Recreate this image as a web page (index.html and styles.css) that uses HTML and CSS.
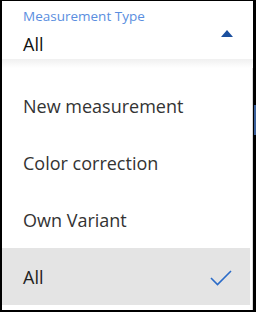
FILE: index.html
```html
<!DOCTYPE html>
<html>
<head>
<meta charset="utf-8">
<link rel="stylesheet" href="styles.css">
</head>
<body>
<div class="frame">
  <div class="field">
    <div class="field-text">
      <div class="label">Measurement Type</div>
      <div class="value">All</div>
    </div>
    <svg class="caret" width="12" height="7" viewBox="0 0 12 7"><path d="M0 7 L6 0 L12 7 Z" fill="#1b4f9e"/></svg>
  </div>
  <div class="shadow"></div>
  <ul class="menu">
    <li class="item">New measurement</li>
    <li class="item">Color correction</li>
    <li class="item">Own Variant</li>
    <li class="item selected"><span>All</span>
      <svg class="check" width="22" height="16" viewBox="0 0 22 16"><path d="M1 8 L7.5 14.5 L21 1" fill="none" stroke="#2a6bc8" stroke-width="1.6"/></svg>
    </li>
  </ul>
  <div class="scroll-hint"></div>
</div>
</body>
</html>
```

FILE: styles.css
```css
html, body {
  margin: 0;
  padding: 0;
  background: #fff;
}
body {
  width: 256px;
  height: 314px;
  font-family: "Open Sans", "Noto Sans", sans-serif;
}
.frame {
  position: relative;
  box-sizing: border-box;
  width: 256px;
  height: 312px;
  border: 2px solid #000;
  border-top-width: 1px;
  border-right-width: 3px;
  background: #fff;
  display: flex;
  flex-direction: column;
}
.field {
  display: flex;
  align-items: center;
  justify-content: space-between;
  padding: 3px 20px 0 21px;
  height: 55px;
}
.label {
  font-size: 13.5px;
  color: #5a8ee0;
  line-height: 18px;
}
.value {
  font-size: 18px;
  color: #111;
  line-height: 24px;
  margin-top: 7px;
}
.caret {
  margin-top: 4px;
}
.shadow {
  height: 9px;
  background: linear-gradient(#f0f0f0, #fff);
}
.menu {
  list-style: none;
  margin: 0;
  padding: 9px 2px 0 0;
  border-right: 1px solid #d8d8d8;
  flex: 1;
}
.item {
  height: 57px;
  display: flex;
  align-items: center;
  justify-content: space-between;
  padding: 0 18px 0 21px;
  font-size: 18px;
  color: #333;
}
.item.selected {
  background: #e4e4e4;
  color: #222;
}
.check {
  margin-top: 2px;
}
.scroll-hint {
  position: absolute;
  right: -3px;
  top: 104px;
  width: 2px;
  height: 30px;
  background: #3a5f9a;
}
```
